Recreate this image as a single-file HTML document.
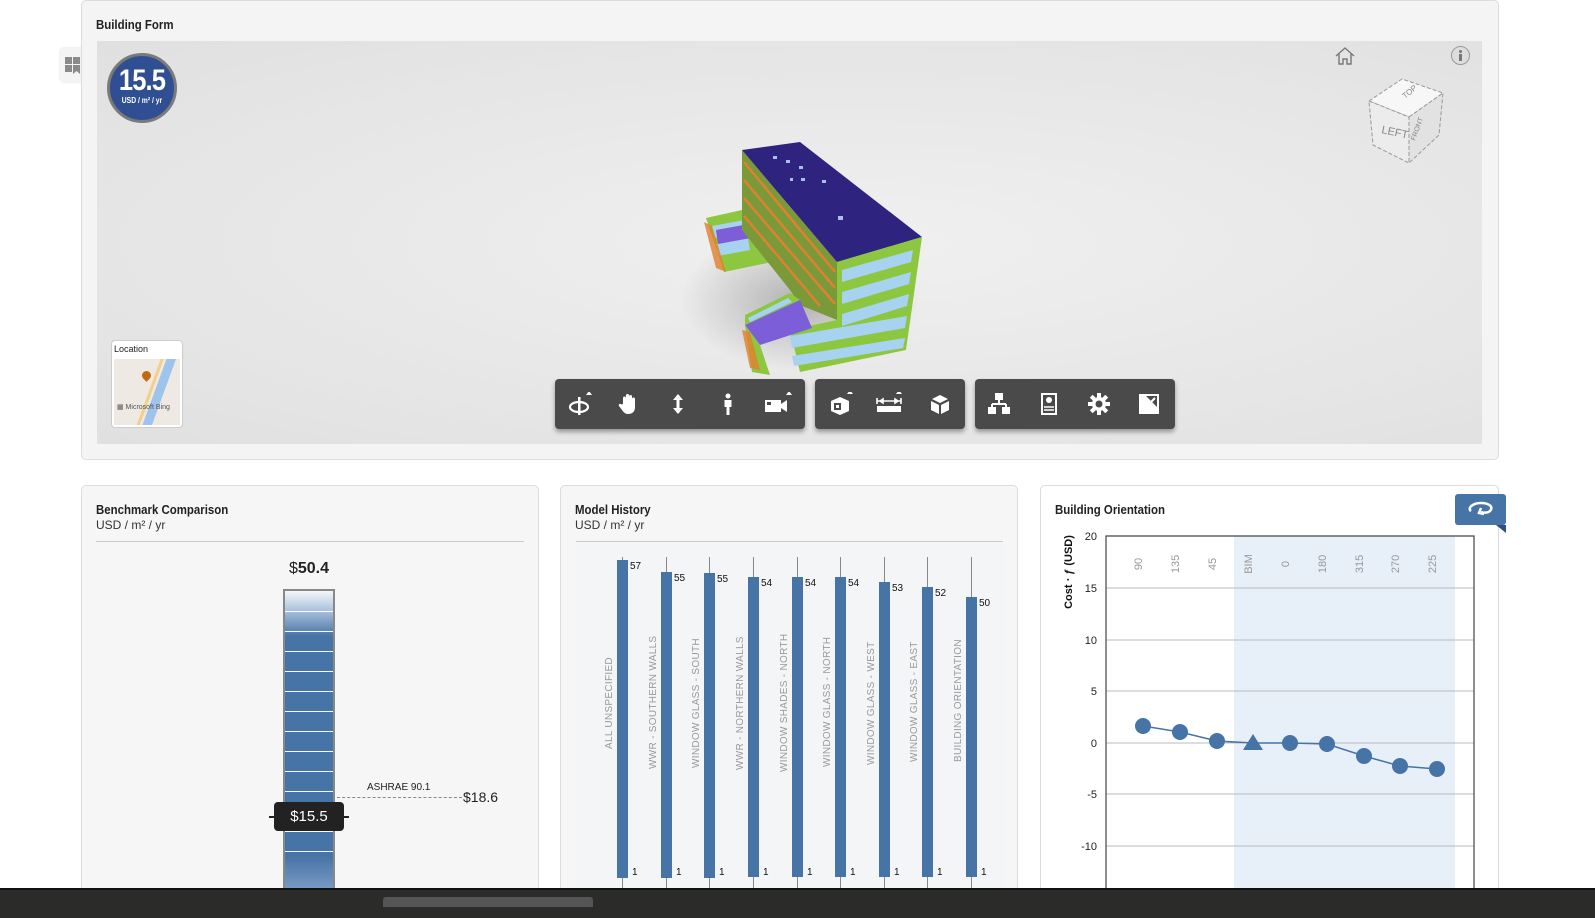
<!DOCTYPE html>
<html><head><meta charset="utf-8"><style>
*{box-sizing:border-box;margin:0;padding:0}
body{width:1595px;height:901px;overflow:hidden;background:#fff;font-family:"Liberation Sans",sans-serif;position:relative;color:#222}
.abs{position:absolute}
.panel{position:absolute;border:1px solid #dcdcdc;border-radius:5px;background:#f6f6f6}
.title{position:absolute;font-family:"Liberation Sans Narrow","Liberation Sans",sans-serif;font-weight:bold;font-size:13px;color:#222;transform:scaleX(.88);transform-origin:left}
.sub{position:absolute;font-size:12px;color:#333}
.tb{position:absolute;top:379px;height:50px;background:#4a4a4a;border-radius:4px;box-shadow:0 3px 5px rgba(0,0,0,.35)}
.ic{position:absolute;top:13px;width:24px;height:24px}
.rl{position:absolute;font-size:10px;color:#999;transform:rotate(-90deg);transform-origin:left top;white-space:nowrap;letter-spacing:.3px}
.bar{position:absolute;width:11px;background:#4674a6}
.stem{position:absolute;width:1px;background:#888}
.num{position:absolute;font-size:10px;color:#111}
</style></head><body>

<div class="abs" style="left:60px;top:48px;width:32px;height:34px;background:#f4f4f4;border-radius:4px 0 0 4px;box-shadow:0 0 2px rgba(0,0,0,.15)">
<svg width="32" height="34"><g fill="#8a8a8a"><rect x="5" y="9" width="7" height="7"/><rect x="13" y="9" width="7" height="7"/><rect x="5" y="17" width="7" height="7"/><path d="M13 17h7v9l-3.5-3-3.5 3z"/></g></svg></div>

<div class="panel" style="left:81px;top:0;width:1418px;height:460px;background:#f4f4f4"></div>
<div class="title" style="left:96px;top:17px">Building Form</div>
<div class="abs" style="left:97px;top:41px;width:1385px;height:403px;background:radial-gradient(ellipse at 55% 50%,#f0f0f0 0%,#e5e5e5 70%,#e0e0e0 100%)"></div>

<div class="abs" style="left:107px;top:53px;width:70px;height:70px;border-radius:50%;background:#2f4f92;border:3px solid #7a7a7a;color:#fff;text-align:center">
<div style="font-weight:bold;font-size:30px;line-height:30px;margin-top:10px;transform:scaleX(.85);letter-spacing:-1px">15.5</div>
<div style="font-size:8px;font-weight:bold;line-height:9px;transform:scaleX(.85)">USD / m² / yr</div></div>

<svg class="abs" style="left:660px;top:130px" width="300" height="260" viewBox="660 130 300 260">
<defs><radialGradient id="sh"><stop offset="0" stop-color="#000" stop-opacity=".25"/><stop offset="1" stop-color="#000" stop-opacity="0"/></radialGradient></defs>
<ellipse cx="800" cy="300" rx="120" ry="70" fill="url(#sh)"/>
<polygon points="706,218 760,206 772,262 724,272" fill="#8dc63f"/>
<polygon points="712,226 755,218 757,230 714,238" fill="#a7d2f0"/>
<polygon points="716,244 748,238 750,250 718,256" fill="#a7d2f0"/>
<polygon points="716,230 760,222 762,236 718,244" fill="#7b5ed8"/>
<polygon points="704,222 712,226 726,272 716,268" fill="#e07f2c" opacity=".8"/>
<polygon points="742,150 837,262 837,320 800,305 790,290 742,230" fill="#7a9a3a"/>
<g stroke="#e08030" stroke-width="2.5"><line x1="744" y1="162" x2="835" y2="272"/><line x1="744" y1="180" x2="835" y2="288"/><line x1="744" y1="198" x2="835" y2="304"/><line x1="744" y1="216" x2="820" y2="306"/></g>
<polygon points="742,150 800,142 922,237 837,262" fill="#2e237e"/>
<g fill="#a8c0e8"><rect x="773" y="156" width="4" height="3"/><rect x="786" y="160" width="4" height="3"/><rect x="801" y="178" width="4" height="3"/><rect x="799" y="166" width="4" height="3"/><rect x="822" y="180" width="4" height="3"/><rect x="838" y="216" width="5" height="4"/><rect x="790" y="178" width="3" height="3"/></g>
<polygon points="837,262 922,237 906,350 800,372 790,330 837,320" fill="#8dc63f"/>
<g fill="#a7d2f0"><polygon points="842,270 913,250 911,262 842,282"/><polygon points="842,292 911,272 909,284 842,304"/><polygon points="842,314 909,294 907,306 842,326"/><polygon points="790,336 907,316 905,328 792,348"/><polygon points="792,356 905,338 903,348 794,366"/></g>
<polygon points="745,325 800,300 812,328 760,345" fill="#7b5ed8"/>
<polygon points="745,315 790,293 800,300 745,325" fill="#8dc63f"/>
<polygon points="748,318 788,298 792,302 750,322" fill="#a7d2f0"/>
<polygon points="745,325 760,345 770,375 752,372" fill="#8dc63f"/>
<polygon points="742,330 750,332 760,370 750,368" fill="#e07f2c" opacity=".8"/>
</svg>

<svg class="abs" style="left:1334px;top:46px" width="22" height="20"><path d="M2 10 L11 2 L20 10 M5 8 V18 H9 V13 H13 V18 H17 V8" fill="none" stroke="#777" stroke-width="1.4"/></svg>
<div class="abs" style="left:1451px;top:46px;width:19px;height:19px;border-radius:50%;border:1px solid #999;background:#ddd"><div style="position:absolute;left:7px;top:3px;width:3px;height:3px;background:#777;border-radius:50%"></div><div style="position:absolute;left:7px;top:7px;width:3px;height:7px;background:#777"></div></div>

<svg class="abs" style="left:1365px;top:75px" width="85" height="92">
<polygon points="4,26 37,4 78,18 44,42" fill="#f7f7f7" stroke="#999" stroke-dasharray="4,2"/>
<polygon points="4,26 44,42 44,88 8,70" fill="#ececec" stroke="#999" stroke-dasharray="4,2"/>
<polygon points="44,42 78,18 74,60 44,88" fill="#e2e2e2" stroke="#999" stroke-dasharray="4,2"/>
<text x="16" y="58" font-size="11" fill="#888" transform="rotate(12 16 58)">LEFT</text>
<text x="40" y="24" font-size="8" fill="#888" transform="rotate(-40 40 24)">TOP</text>
<text x="50" y="66" font-size="7" fill="#888" transform="rotate(-70 50 66)">FRONT</text>
</svg>

<div class="abs" style="left:111px;top:340px;width:72px;height:88px;background:#fff;border:1px solid #ccc;border-radius:4px">
<div style="font-size:9px;color:#222;margin:3px 0 0 2px">Location</div>
<div style="position:absolute;left:2px;top:18px;width:66px;height:66px;background:#eeeae3;overflow:hidden">
<div style="position:absolute;left:40px;top:-10px;width:9px;height:90px;background:#9ec4ee;transform:rotate(20deg)"></div>
<div style="position:absolute;left:34px;top:-10px;width:3px;height:90px;background:#f2cf8a;transform:rotate(20deg)"></div>
<div style="position:absolute;left:28px;top:12px;width:9px;height:9px;border-radius:50% 50% 50% 0;background:#c06a12;transform:rotate(-45deg)"></div>
<div style="position:absolute;left:3px;top:44px;font-size:7px;color:#555">▦ Microsoft Bing</div></div></div>

<!-- toolbars -->
<div class="tb" style="left:555px;width:250px">
<svg class="ic" style="left:13px;width:28px" viewBox="0 0 28 24"><ellipse cx="11" cy="15" rx="9" ry="5" fill="none" stroke="#fff" stroke-width="2.2"/><rect x="10" y="5" width="2.5" height="18" fill="#fff"/><path d="M21 -1l3 4h-6z" fill="#fff"/></svg>
<svg class="ic" style="left:62px" viewBox="0 0 24 24"><path d="M6 12V6a1.5 1.5 0 013 0v5V3.5a1.5 1.5 0 013 0V11V4.5a1.5 1.5 0 013 0V12V7a1.5 1.5 0 013 0v8c0 5-3 7-7 7-3 0-4.5-2-6-4l-3-4c-1-1.5 1-3 2.5-1.5z" fill="#fff"/></svg>
<svg class="ic" style="left:111px" viewBox="0 0 24 24"><path d="M12 2l5 6h-3.5v8H17l-5 6-5-6h3.5V8H7z" fill="#fff"/></svg>
<svg class="ic" style="left:161px" viewBox="0 0 24 24"><circle cx="12" cy="4" r="2.5" fill="#fff"/><path d="M8.5 8h7v7h-2v8h-3v-8h-2z" fill="#fff"/></svg>
<svg class="ic" style="left:208px;width:30px" viewBox="0 0 30 24"><rect x="2" y="8" width="16" height="12" fill="#fff"/><path d="M18 12l6-4v12l-6-4z" fill="#fff"/><rect x="4" y="10" width="4" height="3" fill="#4a4a4a"/><path d="M26 -1l3 4h-6z" fill="#fff"/></svg>
</div>
<div class="tb" style="left:815px;width:150px">
<svg class="ic" style="left:13px;width:28px" viewBox="0 0 28 24"><path d="M3 9l9-4 9 4v10l-9 4-9-4z" fill="#fff"/><rect x="6" y="11" width="7" height="7" fill="#4a4a4a"/><rect x="8" y="13" width="3" height="3" fill="#fff"/><path d="M22 -2l3 4h-6z" fill="#fff"/></svg>
<svg class="ic" style="left:59px;width:30px" viewBox="0 0 30 24"><path d="M3 9h24M3 6v6M27 6v6M6 9l3-2v4zM24 9l-3-2v4z" stroke="#fff" stroke-width="1.6" fill="#fff"/><rect x="3" y="14" width="24" height="6" fill="#fff"/><path d="M25 -2l3 4h-6z" fill="#fff"/></svg>
<svg class="ic" style="left:113px" viewBox="0 0 24 24"><path d="M12 3l8 4-8 4-8-4z M3 9l8 4v9l-8-4z M21 9l-8 4v9l8-4z" fill="#fff"/></svg>
</div>
<div class="tb" style="left:975px;width:200px">
<svg class="ic" style="left:12px" viewBox="0 0 24 24"><rect x="8" y="1" width="8" height="7" fill="#fff"/><path d="M12 8v4M5 12h14M5 12v3M19 12v3" stroke="#fff" stroke-width="2"/><rect x="1" y="15" width="8" height="7" fill="#fff"/><rect x="15" y="15" width="8" height="7" fill="#fff"/></svg>
<svg class="ic" style="left:62px" viewBox="0 0 24 24"><rect x="4" y="1" width="16" height="22" fill="#fff"/><rect x="6" y="3" width="12" height="18" fill="#4a4a4a"/><circle cx="12" cy="8" r="3" fill="#fff"/><path d="M7 15h10M7 18h10" stroke="#fff" stroke-width="1.5"/></svg>
<svg class="ic" style="left:112px" viewBox="0 0 24 24"><g fill="#fff"><circle cx="12" cy="12" r="7"/><rect x="10" y="1" width="4" height="22"/><rect x="1" y="10" width="22" height="4"/><rect x="10" y="1" width="4" height="22" transform="rotate(45 12 12)"/><rect x="10" y="1" width="4" height="22" transform="rotate(-45 12 12)"/></g><circle cx="12" cy="12" r="3.5" fill="#4a4a4a"/></svg>
<svg class="ic" style="left:162px" viewBox="0 0 24 24"><rect x="2" y="2" width="20" height="20" fill="#fff"/><path d="M9 4h11v11z" fill="#4a4a4a"/><path d="M10 14l8-8" stroke="#fff" stroke-width="2"/></svg>
</div>

<div class="panel" style="left:81px;top:485px;width:458px;height:430px"></div>
<div class="panel" style="left:560px;top:485px;width:458px;height:430px"></div>
<div class="panel" style="left:1040px;top:485px;width:459px;height:430px;background:#fff"></div>

<div class="title" style="left:96px;top:502px">Benchmark Comparison</div>
<div class="sub" style="left:96px;top:518px">USD / m² / yr</div>
<div class="abs" style="left:96px;top:541px;width:428px;height:1px;background:#ccc"></div>
<div class="title" style="left:575px;top:502px">Model History</div>
<div class="sub" style="left:575px;top:518px">USD / m² / yr</div>
<div class="abs" style="left:576px;top:541px;width:427px;height:1px;background:#ccc"></div>
<div class="title" style="left:1055px;top:502px">Building Orientation</div>

<div class="abs" style="left:283px;top:560px;width:52px;text-align:center;font-size:16px;font-weight:bold"><span style="font-weight:normal">$</span>50.4</div>
<div class="abs" style="left:283px;top:589px;width:52px;height:312px;border:2px solid #888;border-bottom:none;background:linear-gradient(#f4f7fb 0,#a9c0da 20px,#4674a6 45px);overflow:hidden">
<div style="position:absolute;left:0;right:0;top:0;bottom:0;background:repeating-linear-gradient(#0000 0,#0000 19px,#fff 19px,#fff 20px);background-position:0 1px"></div>
<div style="position:absolute;left:0;right:0;top:265px;bottom:0;background:linear-gradient(#4674a6,#8aa8cf)"></div></div>
<div class="abs" style="left:269px;top:816px;width:80px;height:2px;background:#222"></div>
<div class="abs" style="left:274px;top:802px;width:70px;height:29px;background:#222;border-radius:4px;color:#fff;font-size:15px;text-align:center;line-height:29px">$15.5</div>
<div class="abs" style="left:337px;top:797px;width:125px;border-top:1px dashed #888"></div>
<div class="abs" style="left:367px;top:782px;font-size:10px;color:#222">ASHRAE 90.1</div>
<div class="abs" style="left:463px;top:789px;font-size:14px;color:#222">$18.6</div>

<div class="abs" style="left:576px;top:544px;width:427px;height:357px;background:#f4f5f7"></div>
<div class="stem" style="left:622px;top:557px;height:335px"></div><div class="bar" style="left:617px;top:560px;height:318px"></div><div class="num" style="left:630px;top:561px">57</div><div class="num" style="left:632px;top:867px">1</div>
<div class="stem" style="left:666px;top:557px;height:335px"></div><div class="bar" style="left:661px;top:572px;height:306px"></div><div class="num" style="left:674px;top:573px">55</div><div class="num" style="left:676px;top:867px">1</div>
<div class="stem" style="left:709px;top:557px;height:335px"></div><div class="bar" style="left:704px;top:573px;height:305px"></div><div class="num" style="left:717px;top:574px">55</div><div class="num" style="left:719px;top:867px">1</div>
<div class="stem" style="left:753px;top:557px;height:335px"></div><div class="bar" style="left:748px;top:577px;height:300px"></div><div class="num" style="left:761px;top:578px">54</div><div class="num" style="left:763px;top:867px">1</div>
<div class="stem" style="left:797px;top:557px;height:335px"></div><div class="bar" style="left:792px;top:577px;height:300px"></div><div class="num" style="left:805px;top:578px">54</div><div class="num" style="left:807px;top:867px">1</div>
<div class="stem" style="left:840px;top:557px;height:335px"></div><div class="bar" style="left:835px;top:577px;height:300px"></div><div class="num" style="left:848px;top:578px">54</div><div class="num" style="left:850px;top:867px">1</div>
<div class="stem" style="left:884px;top:557px;height:335px"></div><div class="bar" style="left:879px;top:582px;height:295px"></div><div class="num" style="left:892px;top:583px">53</div><div class="num" style="left:894px;top:867px">1</div>
<div class="stem" style="left:927px;top:557px;height:335px"></div><div class="bar" style="left:922px;top:587px;height:290px"></div><div class="num" style="left:935px;top:588px">52</div><div class="num" style="left:937px;top:867px">1</div>
<div class="stem" style="left:971px;top:557px;height:335px"></div><div class="bar" style="left:966px;top:597px;height:280px"></div><div class="num" style="left:979px;top:598px">50</div><div class="num" style="left:981px;top:867px">1</div>
<div class="rl" style="left:604px;top:749px">ALL UNSPECIFIED</div>
<div class="rl" style="left:648px;top:769px">WWR - SOUTHERN WALLS</div>
<div class="rl" style="left:691px;top:768px">WINDOW GLASS - SOUTH</div>
<div class="rl" style="left:735px;top:770px">WWR - NORTHERN WALLS</div>
<div class="rl" style="left:779px;top:772px">WINDOW SHADES - NORTH</div>
<div class="rl" style="left:822px;top:767px">WINDOW GLASS - NORTH</div>
<div class="rl" style="left:866px;top:765px">WINDOW GLASS - WEST</div>
<div class="rl" style="left:909px;top:762px">WINDOW GLASS - EAST</div>
<div class="rl" style="left:953px;top:762px">BUILDING ORIENTATION</div>

<div class="abs" style="left:1455px;top:494px;width:51px;height:31px;background:#4674a6;border-radius:3px">
<svg width="51" height="31"><path d="M16 17c-4-3 2-8 10-8s13 4 9 8c-2 2-6 2-9 1M26 14l-2 5 5 1" fill="none" stroke="#fff" stroke-width="2.5"/></svg></div>
<div class="abs" style="left:1496px;top:525px;width:0;height:0;border-left:10px solid transparent;border-top:8px solid #2f4f80"></div>
<svg class="abs" style="left:1040px;top:530px" width="440" height="371" viewBox="1040 530 440 371">
<rect x="1234" y="536" width="221" height="365" fill="#e7eff8"/>
<g stroke="#bbb" stroke-width="1"><line x1="1106" y1="588" x2="1474" y2="588"/><line x1="1106" y1="640" x2="1474" y2="640"/><line x1="1106" y1="691" x2="1474" y2="691"/><line x1="1106" y1="743" x2="1474" y2="743"/><line x1="1106" y1="794" x2="1474" y2="794"/><line x1="1106" y1="846" x2="1474" y2="846"/></g>
<path d="M1106 901V536H1474V901" fill="none" stroke="#444" stroke-width="1.2"/>
<g font-size="11" fill="#222" text-anchor="end"><text x="1097" y="540">20</text><text x="1097" y="592">15</text><text x="1097" y="644">10</text><text x="1097" y="695">5</text><text x="1097" y="747">0</text><text x="1097" y="798">-5</text><text x="1097" y="850">-10</text></g>
<text x="1072" y="572" font-size="11" font-weight="bold" fill="#111" text-anchor="middle" transform="rotate(-90 1072 572)">Cost ‧ ƒ (USD)</text>
<g font-size="11" fill="#999" text-anchor="middle">
<text transform="translate(1142 564) rotate(-90)">90</text><text transform="translate(1179 564) rotate(-90)">135</text><text transform="translate(1216 564) rotate(-90)">45</text><text transform="translate(1252 564) rotate(-90)">BIM</text><text transform="translate(1289 564) rotate(-90)">0</text><text transform="translate(1326 564) rotate(-90)">180</text><text transform="translate(1363 564) rotate(-90)">315</text><text transform="translate(1399 564) rotate(-90)">270</text><text transform="translate(1436 564) rotate(-90)">225</text></g>
<polyline points="1143,726 1180,732 1217,741 1253,743 1290,743 1327,744 1364,756 1400,766 1437,769" fill="none" stroke="#4674a6" stroke-width="1.5"/>
<g fill="#4674a6"><circle cx="1143" cy="726" r="8"/><circle cx="1180" cy="732" r="8"/><circle cx="1217" cy="741" r="8"/><path d="M1253 734l10 16h-20z"/><circle cx="1290" cy="743" r="8"/><circle cx="1327" cy="744" r="8"/><circle cx="1364" cy="756" r="8"/><circle cx="1400" cy="766" r="8"/><circle cx="1437" cy="769" r="8"/></g>
</svg>

<div class="abs" style="left:0;top:888px;width:1595px;height:30px;background:#2b2b29;border-top:2px solid #111;z-index:5"></div>
<div class="abs" style="left:383px;top:897px;width:210px;height:10px;background:#555;border-radius:3px 3px 0 0;z-index:6"></div>
</body></html>
